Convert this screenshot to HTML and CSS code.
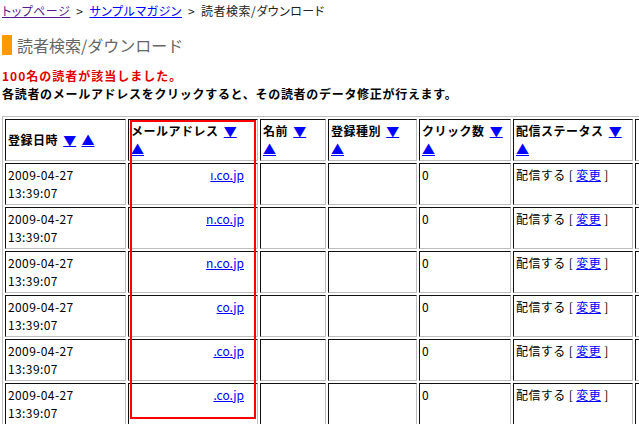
FILE: index.html
```html
<!DOCTYPE html>
<html lang="ja">
<head>
<meta charset="utf-8">
<title>読者検索/ダウンロード</title>
<link rel="stylesheet" href="styles.css">
</head>
<body>
<div class="crumb"><a class="visited" href="#">トップページ</a><span class="sep">&gt;</span><a href="#">サンプルマガジン</a><span class="sep">&gt;</span>読者検索/ダウンロード</div>
<h1 class="title"><span class="bar"></span>読者検索/ダウンロード</h1>
<p class="notice">100名の読者が該当しました。</p>
<p class="desc">各読者のメールアドレスをクリックすると、その読者のデータ修正が行えます。</p>
<div class="wrap">
<table class="grid">
<thead>
<tr>
<th class="c1">登録日時 <a class="sort" href="#">▼</a> <a class="sort" href="#">▲</a></th>
<th class="c2">メールアドレス <a class="sort" href="#">▼</a><br><a class="sort" href="#">▲</a></th>
<th class="c3">名前 <a class="sort" href="#">▼</a><br><a class="sort" href="#">▲</a></th>
<th class="c4">登録種別 <a class="sort" href="#">▼</a><br><a class="sort" href="#">▲</a></th>
<th class="c5">クリック数 <a class="sort" href="#">▼</a><br><a class="sort" href="#">▲</a></th>
<th class="c6">配信ステータス <a class="sort" href="#">▼</a><br><a class="sort" href="#">▲</a></th>
<th class="c7">&nbsp;</th>
</tr>
</thead>
<tbody>
<tr><td>2009-04-27<br>13:39:07</td><td class="mail"><a href="#">ı.co.jp</a></td><td></td><td></td><td>0</td><td>配信する [ <a href="#">変更</a> ]</td><td></td></tr>
<tr><td>2009-04-27<br>13:39:07</td><td class="mail"><a href="#">n.co.jp</a></td><td></td><td></td><td>0</td><td>配信する [ <a href="#">変更</a> ]</td><td></td></tr>
<tr><td>2009-04-27<br>13:39:07</td><td class="mail"><a href="#">n.co.jp</a></td><td></td><td></td><td>0</td><td>配信する [ <a href="#">変更</a> ]</td><td></td></tr>
<tr><td>2009-04-27<br>13:39:07</td><td class="mail"><a href="#">co.jp</a></td><td></td><td></td><td>0</td><td>配信する [ <a href="#">変更</a> ]</td><td></td></tr>
<tr><td>2009-04-27<br>13:39:07</td><td class="mail"><a href="#">.co.jp</a></td><td></td><td></td><td>0</td><td>配信する [ <a href="#">変更</a> ]</td><td></td></tr>
<tr><td>2009-04-27<br>13:39:07</td><td class="mail"><a href="#">.co.jp</a></td><td></td><td></td><td>0</td><td>配信する [ <a href="#">変更</a> ]</td><td></td></tr>
</tbody>
</table>
<div class="hl"></div>
</div>
</body>
</html>
```
FILE: styles.css
```css
html {
  overflow: hidden;
}
body {
  margin: 0;
  padding: 2px 0 0 2px;
  font-family: "Noto Sans CJK JP", "Noto Sans", sans-serif;
  font-size: 12px;
  color: #000;
  background: #fff;
}
a {
  color: #0000ff;
  text-decoration: underline;
}
a.visited {
  color: #551a8b;
}
.crumb {
  line-height: 18px;
  color: #222;
  font-feature-settings: "palt";
  letter-spacing: 0.5px;
}
.sep {
  margin: 0 6px;
}
.title {
  margin: 15px 0 0 0;
  display: flex;
  align-items: center;
  gap: 5px;
  font-size: 16px;
  font-weight: normal;
  line-height: 20px;
  color: #666;
}
.bar {
  width: 10px;
  height: 20px;
  background: #ff9900;
}
.notice {
  margin: 12px 0 0 0;
  line-height: 18px;
  font-weight: bold;
  color: #dd0000;
  letter-spacing: 1px;
}
.desc {
  margin: 0;
  line-height: 18px;
  font-weight: bold;
  letter-spacing: 0.7px;
}
.wrap {
  position: relative;
  margin-top: 13px;
}
.grid {
  box-sizing: border-box;
  table-layout: fixed;
  width: 736px;
  border-collapse: separate;
  border-spacing: 2px;
  border: 1px solid #bdbdbd;
}
.grid th,
.grid td {
  box-sizing: border-box;
  border: 1px solid;
  border-color: #111 #bdbdbd #bdbdbd #111;
  padding: 2px;
  line-height: 18px;
  text-align: left;
}
.grid th {
  vertical-align: middle;
  font-weight: bold;
  letter-spacing: 0.5px;
  word-spacing: 2px;
  white-space: nowrap;
}
.grid td {
  vertical-align: top;
  height: 42px;
  letter-spacing: 0.4px;
}
.sort {
  font-size: 13px;
  letter-spacing: 0;
}
.c1 { width: 121px; }
.c2 { width: 130px; }
.c3 { width: 66px; }
.c4 { width: 89px; }
.c5 { width: 92px; }
.c6 { width: 120px; }
.c7 { width: 100px; }
.grid td.mail {
  text-align: right;
  padding-right: 13px;
  letter-spacing: 0;
}
.hl {
  position: absolute;
  left: 128px;
  top: 4px;
  width: 126px;
  height: 299px;
  box-sizing: border-box;
  border: 2px solid #ff0000;
}
```
